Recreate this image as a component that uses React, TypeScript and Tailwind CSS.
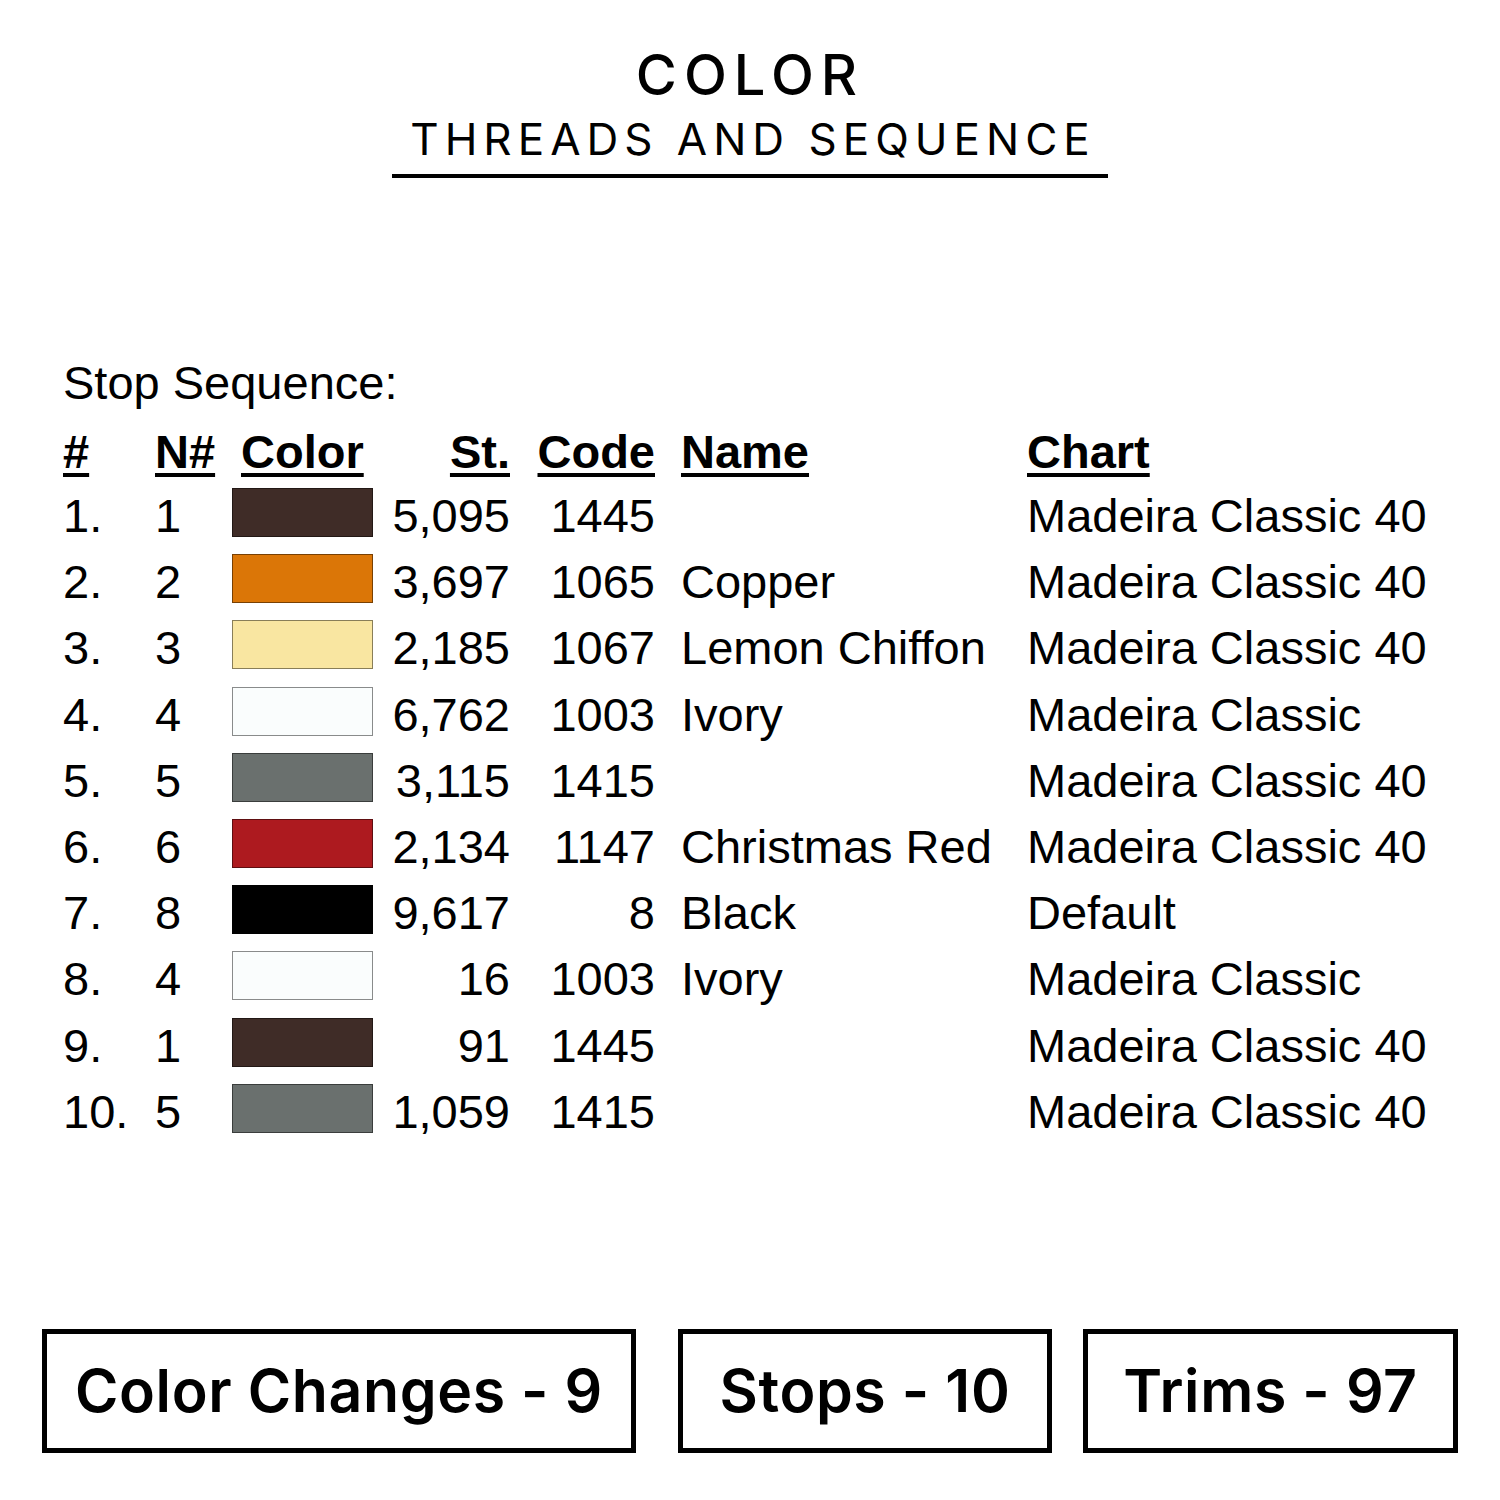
import React from 'react';

type Stop = {
  idx: string;
  needle: string;
  color: string;
  stitches: string;
  code: string;
  name: string;
  chart: string;
};

const stops: Stop[] = [
  { idx: '1.', needle: '1', color: 'bg-[#3f2c27]', stitches: '5,095', code: '1445', name: '', chart: 'Madeira Classic 40' },
  { idx: '2.', needle: '2', color: 'bg-[#db7607]', stitches: '3,697', code: '1065', name: 'Copper', chart: 'Madeira Classic 40' },
  { idx: '3.', needle: '3', color: 'bg-[#f9e6a1]', stitches: '2,185', code: '1067', name: 'Lemon Chiffon', chart: 'Madeira Classic 40' },
  { idx: '4.', needle: '4', color: 'bg-[#fafdfd]', stitches: '6,762', code: '1003', name: 'Ivory', chart: 'Madeira Classic' },
  { idx: '5.', needle: '5', color: 'bg-[#6a706e]', stitches: '3,115', code: '1415', name: '', chart: 'Madeira Classic 40' },
  { idx: '6.', needle: '6', color: 'bg-[#ad1a1f]', stitches: '2,134', code: '1147', name: 'Christmas Red', chart: 'Madeira Classic 40' },
  { idx: '7.', needle: '8', color: 'bg-[#000000]', stitches: '9,617', code: '8', name: 'Black', chart: 'Default' },
  { idx: '8.', needle: '4', color: 'bg-[#fafdfd]', stitches: '16', code: '1003', name: 'Ivory', chart: 'Madeira Classic' },
  { idx: '9.', needle: '1', color: 'bg-[#3f2c27]', stitches: '91', code: '1445', name: '', chart: 'Madeira Classic 40' },
  { idx: '10.', needle: '5', color: 'bg-[#6a706e]', stitches: '1,059', code: '1415', name: '', chart: 'Madeira Classic 40' },
];

const cols = 'grid grid-cols-[92px_77px_141px_137px_145px_372px_1fr]';

const Heading = ({ children }: { children: React.ReactNode }) => (
  <span className="font-bold underline decoration-[4px] underline-offset-[5px]">{children}</span>
);

const CountBox = ({ label, className }: { label: string; className: string }) => (
  <div className={`h-[124px] border-[5px] border-black flex items-center justify-center ${className}`}>
    <span className="font-['Inter',sans-serif] font-semibold text-[59px] leading-none tracking-[0.6px] text-black">{label}</span>
  </div>
);

export default function App() {
  return (
    <div className="w-[1500px] h-[1500px] bg-white text-black flex flex-col">
      {/* Title */}
      <div className="flex flex-col items-center font-['Inter',sans-serif]">
        <div className="mt-[47px] text-[56px] leading-[56px] font-medium tracking-[7px]">COLOR</div>
        <div className="mt-[14px] pl-[6px] text-[44px] leading-[44px] font-normal tracking-[6px]">THREADS AND SEQUENCE</div>
        <div className="mt-[13px] h-[4px] w-[716px] bg-black" />
      </div>

      {/* Stop sequence table */}
      <div className="mt-[172px] pl-[63px] font-['Liberation_Sans',Arial,sans-serif] text-[47px] leading-[66px]">
        <div className="h-[66px] mb-[3px]">Stop Sequence:</div>
        <div className={`${cols} h-[64px]`}>
          <div><Heading>#</Heading></div>
          <div><Heading>N#</Heading></div>
          <div className="pl-[9px]"><Heading>Color</Heading></div>
          <div className="text-right"><Heading>St.</Heading></div>
          <div className="text-right"><Heading>Code</Heading></div>
          <div className="pl-[26px]"><Heading>Name</Heading></div>
          <div><Heading>Chart</Heading></div>
        </div>
        {stops.map((s, i) => (
          <div key={i} className={`${cols} h-[66.2px] items-start whitespace-nowrap`}>
            <div>{s.idx}</div>
            <div>{s.needle}</div>
            <div className={`mt-[5px] h-[49px] border border-black/45 ${s.color}`} />
            <div className="text-right">{s.stitches}</div>
            <div className="text-right">{s.code}</div>
            <div className="pl-[26px]">{s.name}</div>
            <div>{s.chart}</div>
          </div>
        ))}
      </div>

      {/* Summary boxes */}
      <div className="mt-[184px] flex pl-[42px]">
        <CountBox label="Color Changes - 9" className="w-[594px]" />
        <CountBox label="Stops - 10" className="ml-[42px] w-[374px]" />
        <CountBox label="Trims - 97" className="ml-[31px] w-[375px]" />
      </div>
    </div>
  );
}
